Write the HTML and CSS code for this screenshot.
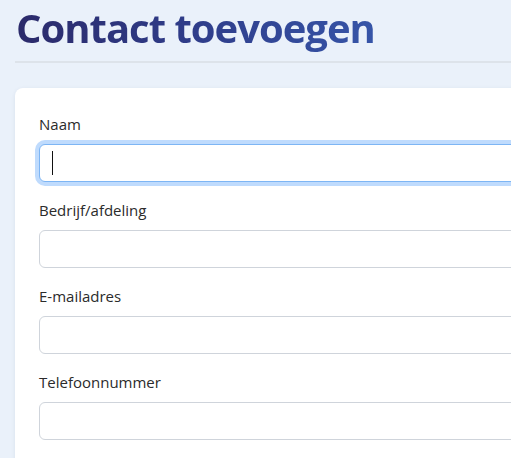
FILE: index.html
```html
<!DOCTYPE html>
<html lang="nl">
<head>
<meta charset="utf-8">
<title>Contact toevoegen</title>
<link rel="stylesheet" href="styles.css">
</head>
<body>
<div class="page">
  <header class="page-header">
    <h1 class="title">Contact toevoegen</h1>
  </header>
  <form class="card">
    <div class="field">
      <label class="label" for="naam">Naam</label>
      <div class="input-wrap">
        <input class="input is-focused" id="naam" type="text">
        <span class="caret"></span>
      </div>
    </div>
    <div class="field">
      <label class="label" for="bedrijf">Bedrijf/afdeling</label>
      <input class="input" id="bedrijf" type="text">
    </div>
    <div class="field">
      <label class="label" for="email">E-mailadres</label>
      <input class="input" id="email" type="email">
    </div>
    <div class="field">
      <label class="label" for="tel">Telefoonnummer</label>
      <input class="input" id="tel" type="tel">
    </div>
  </form>
</div>
</body>
</html>
```

FILE: styles.css
```css
html, body {
  margin: 0;
  padding: 0;
  background: #eaf1fa;
  overflow: hidden;
  height: 100%;
}
body {
  font-family: "Open Sans", "Noto Sans", sans-serif;
  color: #2a2a2a;
}
.page {
  padding: 0 0 0 15px;
  width: 640px;
}
.page-header {
  padding-top: 3px;
  padding-bottom: 4px;
  border-bottom: 2px solid #dde3ea;
  margin-bottom: 25px;
}
.title {
  margin: 0;
  font-size: 40px;
  line-height: 50px;
  font-weight: 700;
  letter-spacing: -1px;
  background: linear-gradient(90deg, #2b2a6a 0%, #2f3d8a 50%, #3655a8 100%);
  -webkit-background-clip: text;
  background-clip: text;
  color: transparent;
  display: inline-block;
  padding: 0 2px 4px 1px;
}
.card {
  background: #ffffff;
  border-radius: 8px;
  box-shadow: 0 1px 4px rgba(30, 50, 90, 0.08);
  padding: 24px 24px 30px;
  display: flex;
  flex-direction: column;
  gap: 16px;
}
.field {
  display: flex;
  flex-direction: column;
  gap: 8px;
}
.label {
  font-size: 15px;
  line-height: 24px;
  color: #2b2b2b;
}
.input-wrap {
  position: relative;
  display: flex;
}
.input {
  box-sizing: border-box;
  height: 38px;
  width: 100%;
  border: 1px solid #cfd4db;
  border-radius: 6px;
  background: #fff;
  font: inherit;
  font-size: 15px;
  padding: 0 12px;
  outline: none;
}
.input.is-focused {
  border-color: #7db5f4;
  box-shadow: 0 0 0 4px #bfdbfd;
}
.caret {
  position: absolute;
  left: 13px;
  top: 7px;
  width: 1px;
  height: 24px;
  background: #111;
}
```
